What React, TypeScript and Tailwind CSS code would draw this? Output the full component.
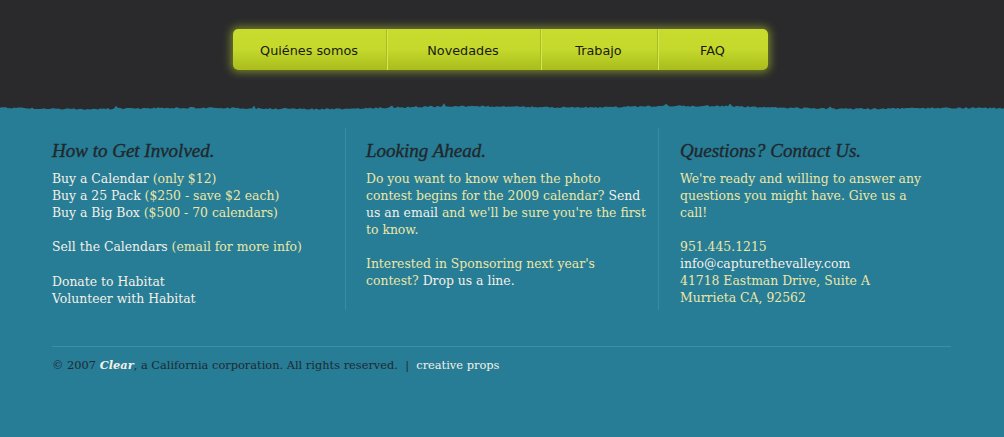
import React from "react";

const serif = { fontFamily: '"DejaVu Serif", Georgia, serif' };
const headFont = { fontFamily: '"Liberation Serif", Georgia, serif' };

function TornEdge() {
  const pts: string[] = ["0,0"];
  let seed = 11;
  const rnd = () => {
    seed = (seed * 9301 + 49297) % 233280;
    return seed / 233280;
  };
  for (let x = 0; x <= 1004; x += 2) {
    const base = 6.5 + Math.sin(x / 41) * 0.8 + Math.sin(x / 127) * 1.1;
    const y = base + (rnd() - 0.5) * 1.6 + (rnd() > 0.97 ? -2.5 : 0);
    pts.push(`${x},${y.toFixed(1)}`);
  }
  pts.push("1004,0");
  return (
    <svg width="1004" height="12" viewBox="0 0 1004 12" className="block">
      <rect width="1004" height="12" fill="#277c96" />
      <polygon points={pts.join(" ")} fill="#2a2a2c" />
    </svg>
  );
}

function NavItem({ label, w, last }: { label: string; w: string; last?: boolean }) {
  return (
    <div
      className={`${w} h-full flex items-center justify-center pt-[2px] ${last ? "" : "border-r border-r-[#a9bd1e] shadow-[1px_0_0_#d3e653]"}`}
    >
      <span className="text-[12.8px] text-[#1a1a10]" style={{ fontFamily: '"DejaVu Sans", Verdana, sans-serif' }}>
        {label}
      </span>
    </div>
  );
}

const W = "text-[#f4f1e6]";
const Y = "text-[#ece7a6]";
const H = "italic text-[19px] leading-[24px] text-[#20282c] mb-[7px] [-webkit-text-stroke:0.35px_#20282c]";

export default function App() {
  return (
    <div className="w-[1004px] h-[437px] bg-[#277c96] overflow-hidden" style={serif}>
      <div className="h-[101px] bg-[#2a2a2c] flex justify-center pt-[29px]">
        <div className="ml-[-4px] w-[535px] h-[41px] rounded-[5px] bg-gradient-to-b from-[#c7dc2f] via-[#c4d92c] to-[#a9bc1c] shadow-[0_0_8px_2px_rgba(190,214,40,0.55)] flex items-stretch">
          <NavItem label="Quiénes somos" w="w-[154px]" />
          <NavItem label="Novedades" w="w-[154px]" />
          <NavItem label="Trabajo" w="w-[117px]" />
          <NavItem label="FAQ" w="w-[110px]" last />
        </div>
      </div>
      <TornEdge />
      <div className="pl-[52px] pt-[15px] flex text-[12.4px] leading-[17px] whitespace-nowrap">
        <div className="w-[294px] border-r border-r-[#3a8ca5] pt-[11px] pb-[3px]">
          <h3 className={H} style={headFont}>How to Get Involved.</h3>
          <p className={W}>
            Buy a Calendar <span className={Y}>(only $12)</span>
            <br />
            Buy a 25 Pack <span className={Y}>($250 - save $2 each)</span>
            <br />
            Buy a Big Box <span className={Y}>($500 - 70 calendars)</span>
          </p>
          <p className={`${W} mt-[17px]`}>
            Sell the Calendars <span className={Y}>(email for more info)</span>
          </p>
          <p className={`${W} mt-[18px]`}>
            Donate to Habitat
            <br />
            Volunteer with Habitat
          </p>
        </div>
        <div className="w-[313px] pl-[20px] border-r border-r-[#3a8ca5] pt-[11px]">
          <h3 className={H} style={headFont}>Looking Ahead.</h3>
          <p className={Y}>
            Do you want to know when the photo
            <br />
            contest begins for the 2009 calendar? <span className={W}>Send</span>
            <br />
            <span className={W}>us an email</span> and we'll be sure you're the first
            <br />
            to know.
          </p>
          <p className={`${Y} mt-[17px]`}>
            Interested in Sponsoring next year's
            <br />
            contest? <span className={W}>Drop us a line.</span>
          </p>
        </div>
        <div className="w-[280px] pl-[21px] pt-[11px]">
          <h3 className={H} style={headFont}>Questions? Contact Us.</h3>
          <p className={Y}>
            We're ready and willing to answer any
            <br />
            questions you might have. Give us a
            <br />
            call!
          </p>
          <p className={`${Y} mt-[17px]`}>
            951.445.1215
            <br />
            <span className={W}>info@capturethevalley.com</span>
            <br />
            41718 Eastman Drive, Suite A
            <br />
            Murrieta CA, 92562
          </p>
        </div>
      </div>
      <div className="ml-[52px] w-[899px] border-t border-t-[#3a90aa] mt-[36px] pt-[10px] text-[11.4px] leading-[17px] text-[#1f2a30] whitespace-nowrap">
        © 2007 <span className={`${W} font-bold italic`}>Clear</span>, a California corporation. All rights reserved.&nbsp; |&nbsp;{" "}
        <span className={W}>creative props</span>
      </div>
    </div>
  );
}
